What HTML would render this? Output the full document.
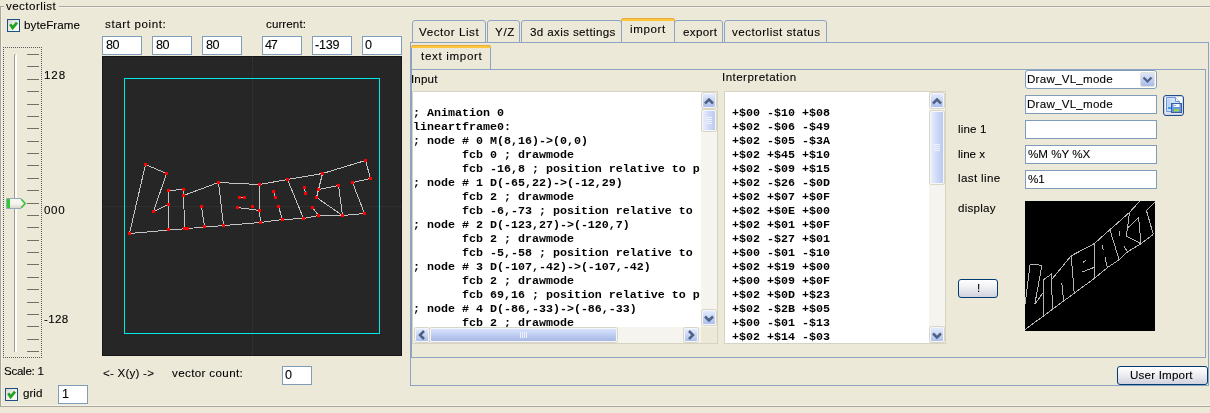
<!DOCTYPE html><html><head><meta charset="utf-8"><style>
html,body{margin:0;padding:0;}
body{width:1210px;height:413px;overflow:hidden;position:relative;background:#ECE9D8;font-family:"Liberation Sans", sans-serif;color:#000;}
div{font-family:"Liberation Sans", sans-serif;}
.t{position:absolute;line-height:15px;white-space:pre;-webkit-font-smoothing:antialiased;will-change:transform;-webkit-text-stroke:0.1px currentColor;}
.mono{font-family:"Liberation Mono", monospace;font-weight:bold;will-change:transform;}
</style></head><body>
<div style="position:absolute;left:0px;top:6px;width:4px;height:1px;background:#ACA899;"></div>
<div style="position:absolute;left:59px;top:6px;width:1151px;height:1px;background:#ACA899;"></div>
<div style="position:absolute;left:1px;top:7px;width:3px;height:1px;background:#f4f2ea;"></div>
<div style="position:absolute;left:59px;top:7px;width:1151px;height:1px;background:#f4f2ea;"></div>
<div style="position:absolute;left:0px;top:6px;width:1px;height:400px;background:#ACA899;"></div>
<div style="position:absolute;left:1px;top:7px;width:1px;height:398px;background:#f4f2ea;"></div>
<div style="position:absolute;left:0px;top:406px;width:1210px;height:1px;background:#ACA899;"></div>
<div style="position:absolute;left:1px;top:405px;width:1209px;height:1px;background:#f4f2ea;"></div>
<div class="t" style="left:6.30px;top:-2px;font-size:11.6px;color:#000;letter-spacing:0.433px;">vectorlist</div>
<div style="position:absolute;left:7px;top:19px;width:13px;height:13px;box-sizing:border-box;border:1px solid #1C4F86;background:linear-gradient(135deg,#d8d8d2 0%,#f0f0ea 55%,#fff 100%);"></div>
<svg style="position:absolute;left:7px;top:19px" width="13" height="13"><path d="M3.3 5.3 L5.6 8.9 L10 3.6" stroke="#21A121" stroke-width="2.7" fill="none"/></svg>
<div class="t" style="left:24.30px;top:17px;font-size:11.6px;color:#000;letter-spacing:0.075px;">byteFrame</div>
<div style="position:absolute;left:3px;top:47px;width:39px;height:311px;box-sizing:border-box;border:1px dotted #5a5a5a;"></div>
<div style="position:absolute;left:14px;top:55px;width:1px;height:297px;background:#9c9b93;"></div>
<div style="position:absolute;left:15px;top:54px;width:2px;height:298px;background:#fff;border-radius:1px 1px 0 0;"></div>
<div style="position:absolute;left:14px;top:54px;width:2px;height:1px;background:#c8c7bf;"></div>
<div style="position:absolute;left:27px;top:54px;width:12px;height:1px;background:#716f66;"></div>
<div style="position:absolute;left:27px;top:66px;width:12px;height:1px;background:#716f66;"></div>
<div style="position:absolute;left:27px;top:79px;width:12px;height:1px;background:#716f66;"></div>
<div style="position:absolute;left:27px;top:91px;width:12px;height:1px;background:#716f66;"></div>
<div style="position:absolute;left:27px;top:104px;width:12px;height:1px;background:#716f66;"></div>
<div style="position:absolute;left:27px;top:116px;width:12px;height:1px;background:#716f66;"></div>
<div style="position:absolute;left:27px;top:128px;width:12px;height:1px;background:#716f66;"></div>
<div style="position:absolute;left:27px;top:141px;width:12px;height:1px;background:#716f66;"></div>
<div style="position:absolute;left:27px;top:153px;width:12px;height:1px;background:#716f66;"></div>
<div style="position:absolute;left:27px;top:165px;width:12px;height:1px;background:#716f66;"></div>
<div style="position:absolute;left:27px;top:178px;width:12px;height:1px;background:#716f66;"></div>
<div style="position:absolute;left:27px;top:190px;width:12px;height:1px;background:#716f66;"></div>
<div style="position:absolute;left:27px;top:203px;width:12px;height:1px;background:#716f66;"></div>
<div style="position:absolute;left:27px;top:215px;width:12px;height:1px;background:#716f66;"></div>
<div style="position:absolute;left:27px;top:227px;width:12px;height:1px;background:#716f66;"></div>
<div style="position:absolute;left:27px;top:240px;width:12px;height:1px;background:#716f66;"></div>
<div style="position:absolute;left:27px;top:252px;width:12px;height:1px;background:#716f66;"></div>
<div style="position:absolute;left:27px;top:264px;width:12px;height:1px;background:#716f66;"></div>
<div style="position:absolute;left:27px;top:277px;width:12px;height:1px;background:#716f66;"></div>
<div style="position:absolute;left:27px;top:289px;width:12px;height:1px;background:#716f66;"></div>
<div style="position:absolute;left:27px;top:302px;width:12px;height:1px;background:#716f66;"></div>
<div style="position:absolute;left:27px;top:314px;width:12px;height:1px;background:#716f66;"></div>
<div style="position:absolute;left:27px;top:326px;width:12px;height:1px;background:#716f66;"></div>
<div style="position:absolute;left:27px;top:339px;width:12px;height:1px;background:#716f66;"></div>
<div style="position:absolute;left:27px;top:351px;width:12px;height:1px;background:#716f66;"></div>
<div class="t" style="left:44.00px;top:67px;font-size:11.6px;color:#000;letter-spacing:0.900px;">128</div>
<div class="t" style="left:44.30px;top:202px;font-size:11.6px;color:#000;letter-spacing:0.650px;">000</div>
<div class="t" style="left:44.30px;top:311px;font-size:11.6px;color:#000;letter-spacing:0.333px;">-128</div>
<svg style="position:absolute;left:5px;top:197px" width="24" height="13">
<defs><linearGradient id="tg" x1="0" y1="0" x2="0" y2="1"><stop offset="0" stop-color="#fbfbf8"/><stop offset="0.6" stop-color="#f1f0ea"/><stop offset="1" stop-color="#d6d3c6"/></linearGradient></defs>
<path d="M1.5 1.5 H16 L21 6.5 L16 11.5 H1.5 Z" fill="url(#tg)" stroke="#98a6bb" stroke-width="1"/>
<rect x="2" y="2" width="3" height="9" fill="#2ccc2c"/>
<path d="M16.2 2.3 L20 6.5 L16.2 10.7" stroke="#33c433" stroke-width="1.4" fill="none"/>
</svg>
<div class="t" style="left:3.50px;top:363px;font-size:11.6px;color:#000;letter-spacing:-0.286px;">Scale: 1</div>
<div style="position:absolute;left:5px;top:388px;width:13px;height:13px;box-sizing:border-box;border:1px solid #1C4F86;background:linear-gradient(135deg,#d8d8d2 0%,#f0f0ea 55%,#fff 100%);"></div>
<svg style="position:absolute;left:5px;top:388px" width="13" height="13"><path d="M3.3 5.3 L5.6 8.9 L10 3.6" stroke="#21A121" stroke-width="2.7" fill="none"/></svg>
<div class="t" style="left:22.50px;top:385px;font-size:11.6px;color:#000;letter-spacing:0.000px;">grid</div>
<div style="position:absolute;left:58px;top:385px;width:30px;height:19px;box-sizing:border-box;border:1px solid #7F9DB9;background:#fff;"></div>
<div class="t" style="left:61.50px;top:387px;font-size:12.6px;color:#000;letter-spacing:0.000px;">1</div>
<div class="t" style="left:105.10px;top:16px;font-size:11.6px;color:#000;letter-spacing:0.609px;">start point:</div>
<div class="t" style="left:265.50px;top:16px;font-size:11.6px;color:#000;letter-spacing:0.086px;">current:</div>
<div style="position:absolute;left:102px;top:36px;width:40px;height:19px;box-sizing:border-box;border:1px solid #7F9DB9;background:#fff;"></div>
<div class="t" style="left:105.60px;top:38px;font-size:12.6px;color:#000;letter-spacing:-0.600px;">80</div>
<div style="position:absolute;left:152px;top:36px;width:40px;height:19px;box-sizing:border-box;border:1px solid #7F9DB9;background:#fff;"></div>
<div class="t" style="left:155.60px;top:38px;font-size:12.6px;color:#000;letter-spacing:-0.600px;">80</div>
<div style="position:absolute;left:202px;top:36px;width:40px;height:19px;box-sizing:border-box;border:1px solid #7F9DB9;background:#fff;"></div>
<div class="t" style="left:205.60px;top:38px;font-size:12.6px;color:#000;letter-spacing:-0.600px;">80</div>
<div style="position:absolute;left:262px;top:36px;width:40px;height:19px;box-sizing:border-box;border:1px solid #7F9DB9;background:#fff;"></div>
<div class="t" style="left:265.40px;top:38px;font-size:12.6px;color:#000;letter-spacing:-1.200px;">47</div>
<div style="position:absolute;left:312px;top:36px;width:40px;height:19px;box-sizing:border-box;border:1px solid #7F9DB9;background:#fff;"></div>
<div class="t" style="left:315.30px;top:38px;font-size:12.6px;color:#000;letter-spacing:-0.233px;">-139</div>
<div style="position:absolute;left:362px;top:36px;width:40px;height:19px;box-sizing:border-box;border:1px solid #7F9DB9;background:#fff;"></div>
<div class="t" style="left:365.20px;top:38px;font-size:12.6px;color:#000;letter-spacing:0.000px;">0</div>
<svg style="position:absolute;left:102px;top:56px" width="300" height="300" shape-rendering="crispEdges">
<rect x="0" y="0" width="300" height="300" fill="#262626"/>
<rect x="0.5" y="0.5" width="299" height="299" fill="none" stroke="#161616" stroke-width="1"/>
<rect x="150" y="0" width="1" height="300" fill="#2f2f2f"/>
<rect x="0" y="150" width="300" height="1" fill="#2f2f2f"/>
<rect x="22.5" y="22.5" width="255" height="255" fill="none" stroke="#00e8e8" stroke-width="1"/>
<polyline points="158.5,166.5 85.5,172.5 27.5,177.5 43.5,108.5 64.5,117.5 51.5,155.5 66.5,148.5 66.5,134.5 81.5,133.5 82.5,172.5" fill="none" stroke="#c4c4c4" stroke-width="1"/>
<polyline points="66.5,173.5 66.5,148.5" fill="none" stroke="#c4c4c4" stroke-width="1"/>
<polyline points="81.5,139.5 116.5,126.5 121.5,169.5" fill="none" stroke="#c4c4c4" stroke-width="1"/>
<polyline points="102.5,170.5 99.5,150.5" fill="none" stroke="#c4c4c4" stroke-width="1"/>
<polyline points="137.5,141.5 142.5,141.5" fill="none" stroke="#c4c4c4" stroke-width="1"/>
<polyline points="135.5,151.5 157.5,154.5" fill="none" stroke="#c4c4c4" stroke-width="1"/>
<polyline points="157.5,128.5 157.5,154.5 158.5,166.5" fill="none" stroke="#c4c4c4" stroke-width="1"/>
<polyline points="116.5,126.5 157.5,128.5 185.5,123.5 220.5,117.5 263.5,104.5 268.5,122.5 250.5,126.5 262.5,157.5" fill="none" stroke="#c4c4c4" stroke-width="1"/>
<polyline points="171.5,135.5 173.5,141.5" fill="none" stroke="#c4c4c4" stroke-width="1"/>
<polyline points="176.5,150.5 180.5,163.5" fill="none" stroke="#c4c4c4" stroke-width="1"/>
<polyline points="185.5,123.5 201.5,162.5" fill="none" stroke="#c4c4c4" stroke-width="1"/>
<polyline points="202.5,131.5 203.5,137.5" fill="none" stroke="#c4c4c4" stroke-width="1"/>
<polyline points="220.5,117.5 216.5,133.5 236.5,129.5 240.5,159.5" fill="none" stroke="#c4c4c4" stroke-width="1"/>
<polyline points="216.5,133.5 214.5,141.5 240.5,159.5" fill="none" stroke="#c4c4c4" stroke-width="1"/>
<polyline points="210.5,151.5 216.5,159.5" fill="none" stroke="#c4c4c4" stroke-width="1"/>
<polyline points="158.5,166.5 180.5,163.5 201.5,162.5 216.5,159.5 240.5,159.5 262.5,157.5" fill="none" stroke="#c4c4c4" stroke-width="1"/>
<rect x="42" y="107" width="3" height="3" fill="#ff0000"/>
<rect x="63" y="116" width="3" height="3" fill="#ff0000"/>
<rect x="50" y="154" width="3" height="3" fill="#ff0000"/>
<rect x="65" y="147" width="3" height="3" fill="#ff0000"/>
<rect x="65" y="133" width="3" height="3" fill="#ff0000"/>
<rect x="80" y="132" width="3" height="3" fill="#ff0000"/>
<rect x="81" y="171" width="3" height="3" fill="#ff0000"/>
<rect x="84" y="171" width="3" height="3" fill="#ff0000"/>
<rect x="26" y="176" width="3" height="3" fill="#ff0000"/>
<rect x="65" y="172" width="3" height="3" fill="#ff0000"/>
<rect x="80" y="138" width="3" height="3" fill="#ff0000"/>
<rect x="115" y="125" width="3" height="3" fill="#ff0000"/>
<rect x="120" y="168" width="3" height="3" fill="#ff0000"/>
<rect x="101" y="169" width="3" height="3" fill="#ff0000"/>
<rect x="98" y="149" width="3" height="3" fill="#ff0000"/>
<rect x="136" y="140" width="3" height="3" fill="#ff0000"/>
<rect x="141" y="140" width="3" height="3" fill="#ff0000"/>
<rect x="134" y="150" width="3" height="3" fill="#ff0000"/>
<rect x="149" y="149" width="3" height="3" fill="#ff0000"/>
<rect x="156" y="153" width="3" height="3" fill="#ff0000"/>
<rect x="157" y="165" width="3" height="3" fill="#ff0000"/>
<rect x="156" y="127" width="3" height="3" fill="#ff0000"/>
<rect x="170" y="134" width="3" height="3" fill="#ff0000"/>
<rect x="172" y="140" width="3" height="3" fill="#ff0000"/>
<rect x="175" y="149" width="3" height="3" fill="#ff0000"/>
<rect x="179" y="162" width="3" height="3" fill="#ff0000"/>
<rect x="184" y="122" width="3" height="3" fill="#ff0000"/>
<rect x="200" y="161" width="3" height="3" fill="#ff0000"/>
<rect x="201" y="130" width="3" height="3" fill="#ff0000"/>
<rect x="202" y="136" width="3" height="3" fill="#ff0000"/>
<rect x="209" y="150" width="3" height="3" fill="#ff0000"/>
<rect x="215" y="158" width="3" height="3" fill="#ff0000"/>
<rect x="219" y="116" width="3" height="3" fill="#ff0000"/>
<rect x="262" y="103" width="3" height="3" fill="#ff0000"/>
<rect x="267" y="121" width="3" height="3" fill="#ff0000"/>
<rect x="249" y="125" width="3" height="3" fill="#ff0000"/>
<rect x="261" y="156" width="3" height="3" fill="#ff0000"/>
<rect x="239" y="158" width="3" height="3" fill="#ff0000"/>
<rect x="235" y="128" width="3" height="3" fill="#ff0000"/>
<rect x="215" y="132" width="3" height="3" fill="#ff0000"/>
<rect x="213" y="140" width="3" height="3" fill="#ff0000"/>
</svg>
<div class="t" style="left:103.20px;top:365px;font-size:11.6px;color:#000;letter-spacing:0.222px;">&lt;- X(y) -&gt;</div>
<div class="t" style="left:172.40px;top:365px;font-size:11.6px;color:#000;letter-spacing:0.367px;">vector count:</div>
<div style="position:absolute;left:282px;top:366px;width:30px;height:19px;box-sizing:border-box;border:1px solid #7F9DB9;background:#fff;"></div>
<div class="t" style="left:285.00px;top:368px;font-size:12.6px;color:#000;letter-spacing:0.000px;">0</div>
<div style="position:absolute;left:410px;top:42px;width:799px;height:344px;box-sizing:border-box;border:1px solid #8DA3C1;"></div>
<div style="position:absolute;left:412px;top:20px;width:74px;height:23px;box-sizing:border-box;border:1px solid #8DA3C1;border-radius:3px 3px 0 0;background:#ECE9D8;"></div>
<div class="t" style="left:419.10px;top:24px;font-size:11.6px;color:#000;letter-spacing:0.550px;">Vector List</div>
<div style="position:absolute;left:487px;top:20px;width:33px;height:23px;box-sizing:border-box;border:1px solid #8DA3C1;border-radius:3px 3px 0 0;background:#ECE9D8;"></div>
<div class="t" style="left:494.90px;top:24px;font-size:11.6px;color:#000;letter-spacing:0.650px;">Y/Z</div>
<div style="position:absolute;left:521px;top:20px;width:101px;height:23px;box-sizing:border-box;border:1px solid #8DA3C1;border-radius:3px 3px 0 0;background:#ECE9D8;"></div>
<div class="t" style="left:529.70px;top:24px;font-size:11.6px;color:#000;letter-spacing:0.367px;">3d axis settings</div>
<div style="position:absolute;left:674px;top:20px;width:49px;height:23px;box-sizing:border-box;border:1px solid #8DA3C1;border-radius:3px 3px 0 0;background:#ECE9D8;"></div>
<div class="t" style="left:682.50px;top:24px;font-size:11.6px;color:#000;letter-spacing:0.340px;">export</div>
<div style="position:absolute;left:724px;top:20px;width:103px;height:23px;box-sizing:border-box;border:1px solid #8DA3C1;border-radius:3px 3px 0 0;background:#ECE9D8;"></div>
<div class="t" style="left:732.10px;top:24px;font-size:11.6px;color:#000;letter-spacing:0.506px;">vectorlist status</div>
<div style="position:absolute;left:621px;top:18px;width:54px;height:25px;box-sizing:border-box;border:1px solid #8DA3C1;border-radius:3px 3px 0 0;background:#ECE9D8;"></div>
<div style="position:absolute;left:621px;top:18px;width:54px;height:3px;background:#FFC73C;border-radius:3px 3px 0 0;border-top:1px solid #E9A93A;box-sizing:border-box;"></div>
<div class="t" style="left:630.20px;top:21px;font-size:11.6px;color:#000;letter-spacing:0.620px;">import</div>
<div style="position:absolute;left:411px;top:69px;width:795px;height:289px;box-sizing:border-box;border:1px solid #8DA3C1;"></div>
<div style="position:absolute;left:411px;top:45px;width:80px;height:25px;box-sizing:border-box;border:1px solid #8DA3C1;border-bottom:none;border-radius:3px 3px 0 0;background:#ECE9D8;"></div>
<div style="position:absolute;left:411px;top:45px;width:80px;height:3px;background:#FFC73C;border-top:1px solid #E9A93A;border-radius:3px 3px 0 0;box-sizing:border-box;"></div>
<div style="position:absolute;left:411px;top:69px;width:80px;height:1px;background:#8DA3C1;"></div>
<div class="t" style="left:420.60px;top:48px;font-size:11.6px;color:#000;letter-spacing:0.670px;">text import</div>
<div class="t" style="left:411.40px;top:71px;font-size:11.6px;color:#000;letter-spacing:0.150px;">Input</div>
<div class="t" style="left:722.30px;top:69px;font-size:11.6px;color:#000;letter-spacing:0.446px;">Interpretation</div>
<div style="position:absolute;left:412px;top:91px;width:306px;height:253px;background:#D6D3C4;"></div>
<div style="position:absolute;left:413px;top:92px;width:288px;height:235px;background:#fff;"></div>
<div style="position:absolute;left:701px;top:92px;width:16px;height:235px;background:#F5F4EF;"></div>
<div style="position:absolute;left:413px;top:327px;width:288px;height:16px;background:#F5F4EF;"></div>
<div style="position:absolute;left:701px;top:327px;width:16px;height:16px;background:#ECE9D8;"></div>
<div style="position:absolute;left:702px;top:93px;width:14px;height:15px;box-sizing:border-box;border:1px solid #f4f6fd;border-radius:2px;background:linear-gradient(#e4ebfd,#adbfeb);box-shadow:0 0 0 1px #d9d6c6;"></div>
<svg style="position:absolute;left:0;top:0" width="1210" height="413"><path d="M705.0,103.5 L709.0,99.5 L713.0,103.5" stroke="#4D6185" stroke-width="2.5" fill="none"/></svg>
<div style="position:absolute;left:702px;top:110px;width:14px;height:21px;box-sizing:border-box;border:1px solid #f4f6fd;border-radius:2px;background:linear-gradient(90deg,#e9eefc,#d3ddf8 40%,#b9c9f1 100%);box-shadow:0 0 0 1px #d9d6c6;"></div>
<div style="position:absolute;left:706px;top:117px;width:6px;height:1px;background:#eef2fd;"></div>
<div style="position:absolute;left:706px;top:119px;width:6px;height:1px;background:#eef2fd;"></div>
<div style="position:absolute;left:706px;top:121px;width:6px;height:1px;background:#eef2fd;"></div>
<div style="position:absolute;left:706px;top:123px;width:6px;height:1px;background:#eef2fd;"></div>
<div style="position:absolute;left:702px;top:310px;width:14px;height:15px;box-sizing:border-box;border:1px solid #f4f6fd;border-radius:2px;background:linear-gradient(#e4ebfd,#adbfeb);box-shadow:0 0 0 1px #d9d6c6;"></div>
<svg style="position:absolute;left:0;top:0" width="1210" height="413"><path d="M705.0,316.5 L709.0,320.5 L713.0,316.5" stroke="#4D6185" stroke-width="2.5" fill="none"/></svg>
<div style="position:absolute;left:415px;top:328px;width:14px;height:14px;box-sizing:border-box;border:1px solid #f4f6fd;border-radius:2px;background:linear-gradient(#e4ebfd,#adbfeb);box-shadow:0 0 0 1px #d9d6c6;"></div>
<svg style="position:absolute;left:0;top:0" width="1210" height="413"><path d="M424.0,331.0 L420.0,335.0 L424.0,339.0" stroke="#4D6185" stroke-width="2.5" fill="none"/></svg>
<div style="position:absolute;left:430px;top:328px;width:187px;height:14px;box-sizing:border-box;border:1px solid #f4f6fd;border-radius:2px;background:linear-gradient(#d9e3fc,#c3d1f4 40%,#a7b8e2 100%);box-shadow:0 0 0 1px #d9d6c6;"></div>
<div style="position:absolute;left:520px;top:332px;width:1px;height:6px;background:#eef2fd;"></div>
<div style="position:absolute;left:522px;top:332px;width:1px;height:6px;background:#eef2fd;"></div>
<div style="position:absolute;left:524px;top:332px;width:1px;height:6px;background:#eef2fd;"></div>
<div style="position:absolute;left:526px;top:332px;width:1px;height:6px;background:#eef2fd;"></div>
<div style="position:absolute;left:684px;top:328px;width:14px;height:14px;box-sizing:border-box;border:1px solid #f4f6fd;border-radius:2px;background:linear-gradient(#e4ebfd,#adbfeb);box-shadow:0 0 0 1px #d9d6c6;"></div>
<svg style="position:absolute;left:0;top:0" width="1210" height="413"><path d="M689.0,331.0 L693.0,335.0 L689.0,339.0" stroke="#4D6185" stroke-width="2.5" fill="none"/></svg>
<div style="position:absolute;left:413.2px;top:92px;width:288px;height:235px;overflow:hidden;">
<pre class="mono" style="position:absolute;left:0;top:13.91px;margin:0;font-size:11.67px;line-height:14px;color:#000;">; Animation 0
lineartframe0:
; node # 0 M(8,16)-&gt;(0,0)
       fcb 0 ; drawmode
       fcb -16,8 ; position relative to p
; node # 1 D(-65,22)-&gt;(-12,29)
       fcb 2 ; drawmode
       fcb -6,-73 ; position relative to
; node # 2 D(-123,27)-&gt;(-120,7)
       fcb 2 ; drawmode
       fcb -5,-58 ; position relative to
; node # 3 D(-107,-42)-&gt;(-107,-42)
       fcb 2 ; drawmode
       fcb 69,16 ; position relative to p
; node # 4 D(-86,-33)-&gt;(-86,-33)
       fcb 2 ; drawmode</pre></div>
<div style="position:absolute;left:724px;top:91px;width:222px;height:253px;background:#D6D3C4;"></div>
<div style="position:absolute;left:725px;top:92px;width:204px;height:251px;background:#fff;"></div>
<div style="position:absolute;left:929px;top:92px;width:16px;height:251px;background:#F5F4EF;"></div>
<div style="position:absolute;left:930px;top:93px;width:14px;height:15px;box-sizing:border-box;border:1px solid #f4f6fd;border-radius:2px;background:linear-gradient(#e4ebfd,#adbfeb);box-shadow:0 0 0 1px #d9d6c6;"></div>
<svg style="position:absolute;left:0;top:0" width="1210" height="413"><path d="M933.0,103.5 L937.0,99.5 L941.0,103.5" stroke="#4D6185" stroke-width="2.5" fill="none"/></svg>
<div style="position:absolute;left:930px;top:111px;width:14px;height:73px;box-sizing:border-box;border:1px solid #f4f6fd;border-radius:2px;background:linear-gradient(90deg,#e9eefc,#d3ddf8 40%,#b9c9f1 100%);box-shadow:0 0 0 1px #d9d6c6;"></div>
<div style="position:absolute;left:934px;top:144px;width:6px;height:1px;background:#eef2fd;"></div>
<div style="position:absolute;left:934px;top:146px;width:6px;height:1px;background:#eef2fd;"></div>
<div style="position:absolute;left:934px;top:148px;width:6px;height:1px;background:#eef2fd;"></div>
<div style="position:absolute;left:934px;top:150px;width:6px;height:1px;background:#eef2fd;"></div>
<div style="position:absolute;left:930px;top:327px;width:14px;height:15px;box-sizing:border-box;border:1px solid #f4f6fd;border-radius:2px;background:linear-gradient(#e4ebfd,#adbfeb);box-shadow:0 0 0 1px #d9d6c6;"></div>
<svg style="position:absolute;left:0;top:0" width="1210" height="413"><path d="M933.0,333.5 L937.0,337.5 L941.0,333.5" stroke="#4D6185" stroke-width="2.5" fill="none"/></svg>
<div style="position:absolute;left:731.8px;top:92px;width:197px;height:251px;overflow:hidden;">
<pre class="mono" style="position:absolute;left:0;top:13.91px;margin:0;font-size:11.67px;line-height:14px;color:#000;">+$00 -$10 +$08
+$02 -$06 -$49
+$02 -$05 -$3A
+$02 +$45 +$10
+$02 -$09 +$15
+$02 -$26 -$0D
+$02 +$07 +$0F
+$02 +$0E +$00
+$02 +$01 +$0F
+$02 -$27 +$01
+$00 -$01 -$10
+$02 +$19 +$00
+$00 +$09 +$0F
+$02 +$0D +$23
+$02 -$2B +$05
+$00 -$01 -$13
+$02 +$14 -$03</pre></div>
<div style="position:absolute;left:1025px;top:70px;width:132px;height:19px;box-sizing:border-box;border:1px solid #7F9DB9;border-radius:3px;background:#fff;"></div>
<div class="t" style="left:1027.20px;top:71px;font-size:11.6px;color:#000;letter-spacing:0.236px;">Draw_VL_mode</div>
<div style="position:absolute;left:1140px;top:72px;width:15px;height:15px;box-sizing:border-box;border:1px solid #e6e2d2;border-radius:2px;background:linear-gradient(#dde5fb,#a9bbe9);"></div>
<svg style="position:absolute;left:1140px;top:72px" width="15" height="15"><path d="M3.5,5.5 L7.5,9.5 L11.5,5.5" stroke="#4D6185" stroke-width="2.2" fill="none"/></svg>
<div style="position:absolute;left:1025px;top:95px;width:132px;height:19px;box-sizing:border-box;border:1px solid #7F9DB9;background:#fff;"></div>
<div class="t" style="left:1027.20px;top:96px;font-size:11.6px;color:#000;letter-spacing:0.236px;">Draw_VL_mode</div>
<div style="position:absolute;left:1163px;top:95px;width:21px;height:21px;box-sizing:border-box;border:1px solid #244A8A;border-radius:3px;background:linear-gradient(#ffffff,#f2f2f6 60%,#dcdce6);box-shadow:inset 0 0 0 1px #c9d6ee;"></div>
<svg style="position:absolute;left:1163px;top:95px" width="21" height="21">
<path d="M3.5,2.5 H12.5 L16.5,6.5 V16.5 H3.5 Z" fill="#d3e2f8" stroke="#6b98d6" stroke-width="1"/>
<path d="M12.5,2.5 V6.5 H16.5" fill="#f4f8fe" stroke="#6b98d6" stroke-width="1"/>
<rect x="4.5" y="4" width="3" height="11" fill="#bcd3f3"/>
<rect x="5" y="12" width="4" height="2" fill="#3d9de8"/>
<rect x="8.5" y="8.5" width="10" height="9" fill="#6f96da" stroke="#3a5ea6" stroke-width="1"/>
<rect x="10.5" y="9" width="6" height="3" fill="#f4f6fb"/>
<rect x="11.5" y="10" width="1" height="1" fill="#3a5ea6"/>
<rect x="11" y="14" width="5" height="2.5" fill="#8cd24a"/>
</svg>
<div style="position:absolute;left:1025px;top:120px;width:132px;height:19px;box-sizing:border-box;border:1px solid #7F9DB9;background:#fff;"></div>
<div style="position:absolute;left:1025px;top:145px;width:132px;height:19px;box-sizing:border-box;border:1px solid #7F9DB9;background:#fff;"></div>
<div class="t" style="left:1028.20px;top:146px;font-size:11.6px;color:#000;letter-spacing:0.000px;">%M %Y %X</div>
<div style="position:absolute;left:1025px;top:170px;width:132px;height:19px;box-sizing:border-box;border:1px solid #7F9DB9;background:#fff;"></div>
<div class="t" style="left:1028.20px;top:171px;font-size:11.6px;color:#000;letter-spacing:0.000px;">%1</div>
<div class="t" style="left:958.00px;top:121px;font-size:11.6px;color:#000;letter-spacing:0.140px;">line 1</div>
<div class="t" style="left:958.00px;top:146px;font-size:11.6px;color:#000;letter-spacing:0.000px;">line x</div>
<div class="t" style="left:958.00px;top:170px;font-size:11.6px;color:#000;letter-spacing:0.362px;">last line</div>
<div class="t" style="left:958.40px;top:200px;font-size:11.6px;color:#000;letter-spacing:0.250px;">display</div>
<div style="position:absolute;left:958px;top:279px;width:40px;height:19px;box-sizing:border-box;border:1px solid #003C74;border-radius:3px;background:linear-gradient(#ffffff,#f3f3f6 35%,#d2d2de);"></div>
<div class="t" style="left:976.60px;top:280px;font-size:11.6px;color:#000;letter-spacing:0.000px;">!</div>
<svg style="position:absolute;left:1025px;top:201px" width="130" height="130" shape-rendering="crispEdges">
<rect x="0" y="0" width="130" height="130" fill="#000"/>
<polyline points="70.0,76.9 29.0,107.1 -3.5,131.3 5.1,63.2 16.9,64.3 9.8,103.2 18.2,91.7 18.1,79.0 26.6,73.0 27.3,108.1" fill="none" stroke="#b4b4b4" stroke-width="1"/>
<polyline points="18.4,114.4 18.2,91.7" fill="none" stroke="#b4b4b4" stroke-width="1"/>
<polyline points="26.6,78.5 46.2,54.8 49.2,92.1" fill="none" stroke="#b4b4b4" stroke-width="1"/>
<polyline points="38.6,99.5 36.8,82.4" fill="none" stroke="#b4b4b4" stroke-width="1"/>
<polyline points="58.0,61.3 60.9,59.6" fill="none" stroke="#b4b4b4" stroke-width="1"/>
<polyline points="57.0,71.1 69.4,66.3" fill="none" stroke="#b4b4b4" stroke-width="1"/>
<polyline points="69.2,42.7 69.4,66.3 70.0,76.9" fill="none" stroke="#b4b4b4" stroke-width="1"/>
<polyline points="46.2,54.8 69.2,42.7 84.9,28.7 104.5,11.4 128.6,-15.0 131.5,-0.4 121.4,9.4 128.3,33.4" fill="none" stroke="#b4b4b4" stroke-width="1"/>
<polyline points="77.1,44.3 78.3,49.1" fill="none" stroke="#b4b4b4" stroke-width="1"/>
<polyline points="80.0,56.2 82.3,66.7" fill="none" stroke="#b4b4b4" stroke-width="1"/>
<polyline points="84.9,28.7 94.1,58.7" fill="none" stroke="#b4b4b4" stroke-width="1"/>
<polyline points="94.5,30.2 95.1,35.3" fill="none" stroke="#b4b4b4" stroke-width="1"/>
<polyline points="104.5,11.4 102.4,27.2 113.6,16.8 116.0,42.7" fill="none" stroke="#b4b4b4" stroke-width="1"/>
<polyline points="102.4,27.2 101.3,35.2 116.0,42.7" fill="none" stroke="#b4b4b4" stroke-width="1"/>
<polyline points="99.1,45.6 102.5,50.9" fill="none" stroke="#b4b4b4" stroke-width="1"/>
<polyline points="70.0,76.9 82.3,66.7 94.1,58.7 102.5,50.9 116.0,42.7 128.3,33.4" fill="none" stroke="#b4b4b4" stroke-width="1"/>
</svg>
<div style="position:absolute;left:1117px;top:366px;width:91px;height:19px;box-sizing:border-box;border:1px solid #003C74;border-radius:3px;background:linear-gradient(#ffffff,#f3f3f6 35%,#d2d2de);"></div>
<div class="t" style="left:1130.20px;top:367px;font-size:11.6px;color:#000;letter-spacing:0.190px;">User Import</div>
</body></html>
